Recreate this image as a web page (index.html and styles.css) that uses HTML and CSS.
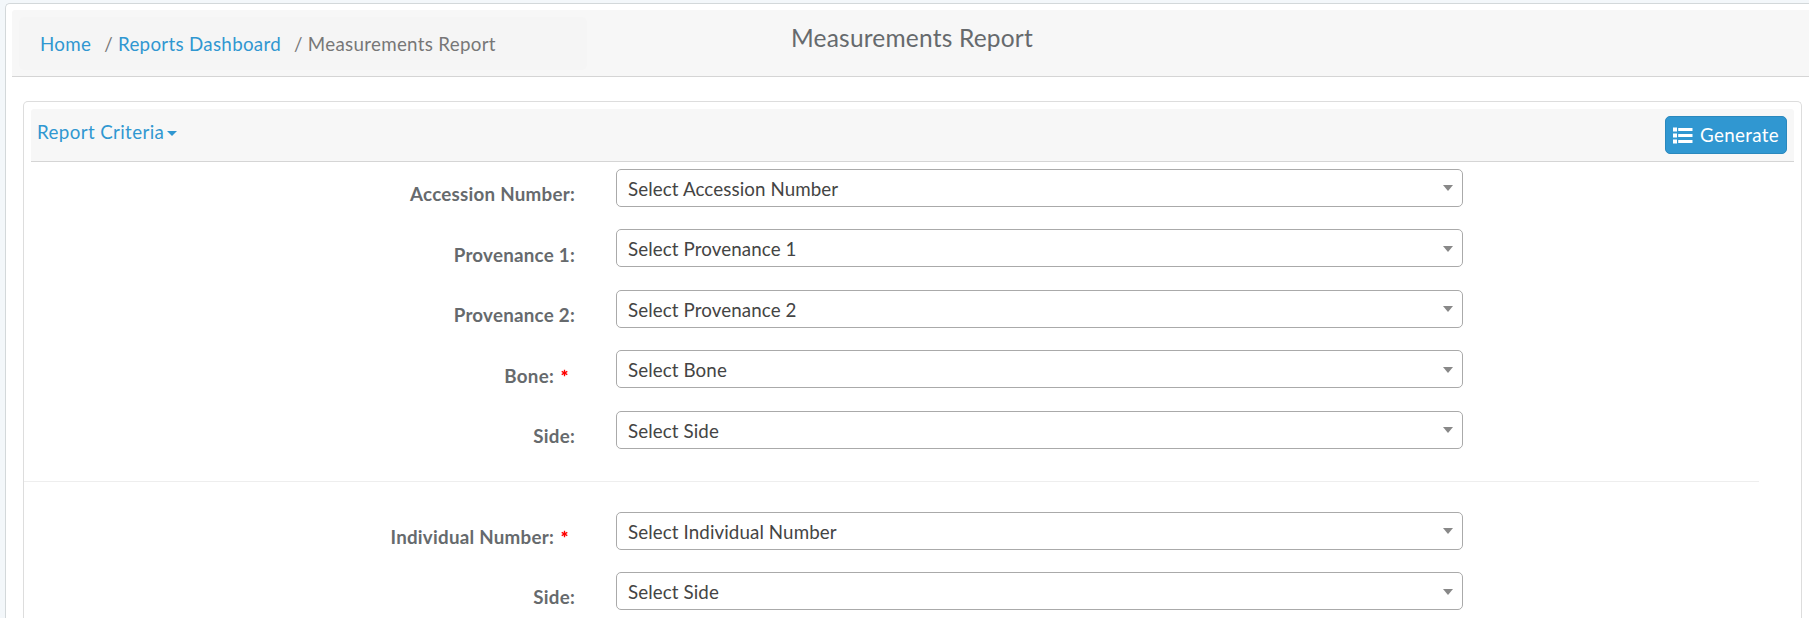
FILE: index.html
```html
<!DOCTYPE html>
<html lang="en">
<head>
<meta charset="utf-8">
<title>Measurements Report</title>
<link rel="stylesheet" href="styles.css">
</head>
<body>
<main class="page">
  <header class="page-header">
    <nav class="breadcrumb">
      <a href="#">Home</a><span class="sep">/</span><a href="#">Reports Dashboard</a><span class="sep">/</span><span>Measurements Report</span>
    </nav>
    <h1 class="title">Measurements Report</h1>
  </header>
  <section class="panel">
    <div class="panel-header">
      <a class="criteria" href="#">Report Criteria<svg class="caret" viewBox="0 0 10 5"><path d="M0 0h10L5 5z"/></svg></a>
      <button class="generate" type="button">
        <svg class="list-icon" viewBox="0 0 20 17"><path d="M0 .5h4v4H0zM5.200 1h14.300v3H5.200zM0 6.500h4v4H0zM5.200 7h14.300v3H5.200zM0 12.500h4v4H0zM5.200 13h14.300v3H5.200z"/></svg>
        <span>Generate</span>
      </button>
    </div>
    <form class="criteria-form">
      <div class="row"><label>Accession Number:</label><div class="select"><span>Select Accession Number</span><i class="arrow"></i></div></div>
      <div class="row"><label>Provenance 1:</label><div class="select"><span>Select Provenance 1</span><i class="arrow"></i></div></div>
      <div class="row"><label>Provenance 2:</label><div class="select"><span>Select Provenance 2</span><i class="arrow"></i></div></div>
      <div class="row"><label class="required">Bone:<svg class="star" viewBox="0 0 8 8"><path d="M4 .3v7.400M.8 2.150l6.400 3.700M.8 5.850l6.400-3.700"/></svg></label><div class="select"><span>Select Bone</span><i class="arrow"></i></div></div>
      <div class="row"><label>Side:</label><div class="select"><span>Select Side</span><i class="arrow"></i></div></div>
      <hr class="divider">
      <div class="row"><label class="required">Individual Number:<svg class="star" viewBox="0 0 8 8"><path d="M4 .3v7.400M.8 2.150l6.400 3.700M.8 5.850l6.400-3.700"/></svg></label><div class="select"><span>Select Individual Number</span><i class="arrow"></i></div></div>
      <div class="row"><label>Side:</label><div class="select"><span>Select Side</span><i class="arrow"></i></div></div>
    </form>
  </section>
</main>
</body>
</html>
```

FILE: styles.css
```css
* { box-sizing: border-box; }
body {
  margin: 0;
  height: 618px;
  overflow: hidden;
  padding: 3px 0 0 5px;
  background: #f3f7fa;
  color: #666a6d;
  font: 18.75px/27px Lato, sans-serif;
  letter-spacing: .27px;
}
a { color: #3097d1; text-decoration: none; }
.page {
  height: 615px;
  overflow: hidden;
  padding: 6px 0 0 6px;
  border: 1px solid #d3d8da;
  border-width: 1px 0 0 1px;
  border-radius: 5px 0 0 0;
  background: #fff;
}
.page-header {
  display: flex;
  height: 67px;
  padding: 7px 0 0 7px;
  background: #f7f7f7;
  border-bottom: 1px solid #d5d5d5;
  border-radius: 3px 0 0 0;
}
.breadcrumb {
  display: flex;
  width: 568px;
  height: 53px;
  padding: 13px 0 0 21px;
  background: #f5f5f5;
  border-radius: 5px;
  color: #777;
  white-space: nowrap;
  letter-spacing: .3px;
}
.sep { margin: 0 5px 0 13px; }
.title {
  margin: 5px 0 0 204px;
  font-size: 24.5px;
  font-weight: 400;
  line-height: 32px;
  letter-spacing: .2px;
}
.panel {
  width: 1779px;
  height: 517px;
  overflow: hidden;
  margin: 24px 0 0 11px;
  padding-top: 7px;
  border: 1px solid #ddd;
  border-bottom: 0;
  border-radius: 5px 5px 0 0;
}
.panel-header {
  display: flex;
  justify-content: space-between;
  height: 53px;
  margin: 0 7px;
  padding: 7px 7px 0 6px;
  background: #f7f7f7;
  border-bottom: 1px solid #d5d5d5;
  border-radius: 3px 3px 0 0;
}
.criteria {
  padding-top: 2px;
  letter-spacing: .38px;
}
.caret {
  width: 10px;
  height: 5px;
  margin-left: 3px;
  vertical-align: 3px;
  fill: #3097d1;
}
.generate {
  display: flex;
  align-items: center;
  gap: 7px;
  width: 122px;
  height: 38px;
  padding: 0 7px;
  border: 1px solid #2a88bd;
  border-radius: 5px;
  background: #3097d1;
  color: #fff;
  font: inherit;
  letter-spacing: .35px;
}
.generate span { padding-bottom: 2px; }
.list-icon { flex: none; width: 20px; height: 17px; fill: #fff; }
.criteria-form { padding-top: 6.8px; }
.row { display: flex; height: 60.5px; }
.row label {
  width: 551px;
  padding: 11.3px 0 0;
  font-weight: 700;
  text-align: right;
  letter-spacing: .25px;
}
.row .required { padding-right: 7px; }
.star {
  width: 7px;
  height: 8px;
  margin-left: 7px;
  vertical-align: 5.5px;
  fill: none;
  stroke: #f00;
  stroke-width: 1.5;
}
.select {
  display: flex;
  justify-content: space-between;
  align-items: center;
  width: 847px;
  height: 38px;
  margin-left: 41px;
  padding: 1px 9px 0 11px;
  border: 1px solid #aaa;
  border-radius: 5px;
  color: #444;
  letter-spacing: .1px;
}
.arrow {
  border: solid transparent;
  border-width: 6px 5px 0;
  border-top-color: #888;
}
.divider {
  width: 1735px;
  height: 1px;
  margin: 9.7px 0 29.7px;
  border: 0;
  background: #eee;
}
```
